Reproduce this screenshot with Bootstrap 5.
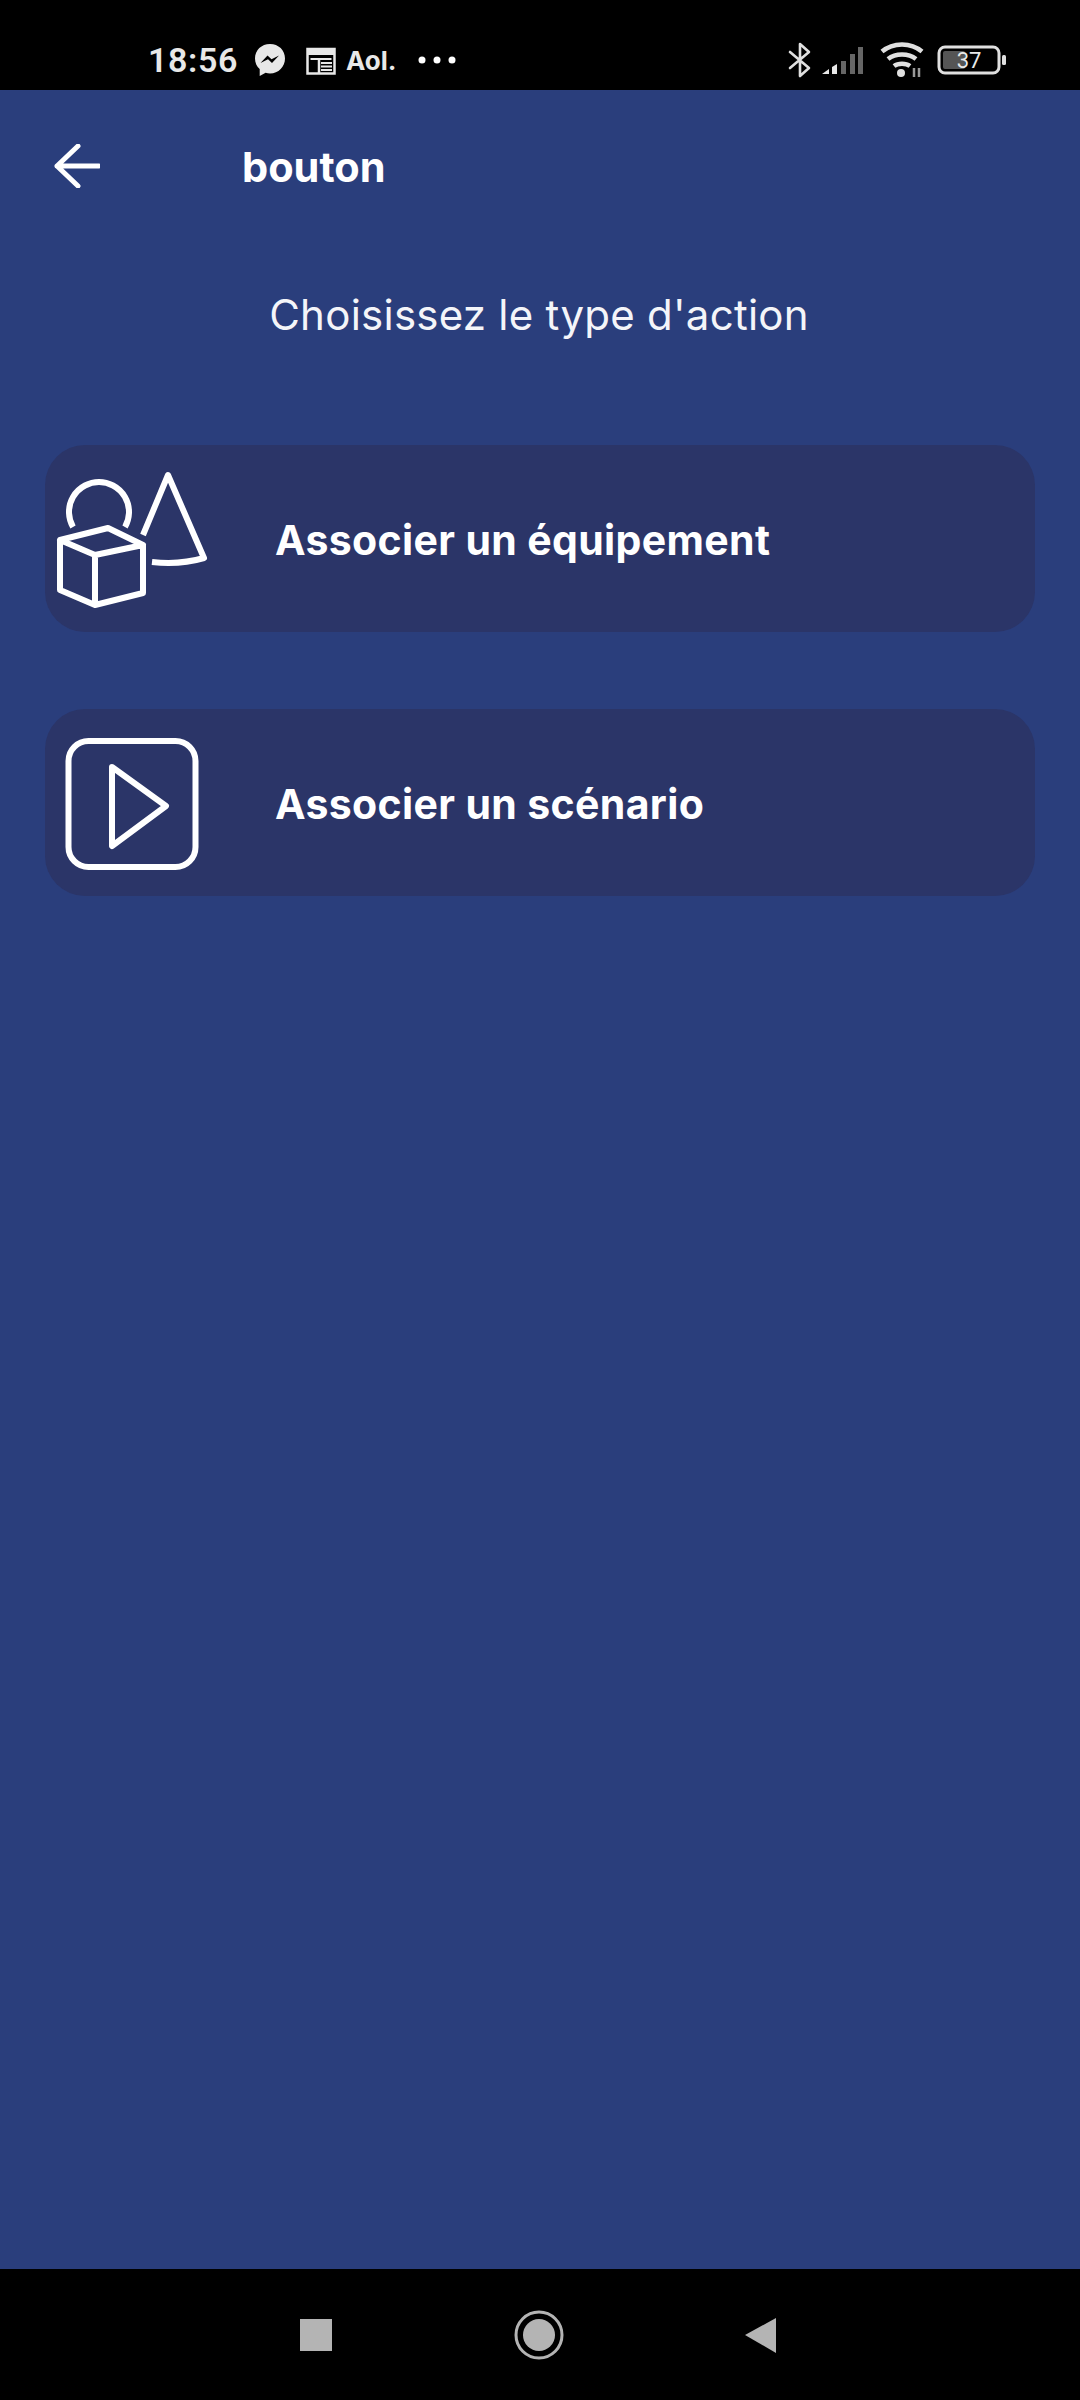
<!DOCTYPE html>
<html lang="fr">
<head>
    <meta charset="UTF-8">
    <meta name="viewport" content="width=device-width, initial-scale=1.0">
    <title>bouton</title>
    <link href="https://cdn.jsdelivr.net/npm/bootstrap@5.3.3/dist/css/bootstrap.min.css" rel="stylesheet">
    <style>
        html, body { height: 2400px; }
        body {
            background: #2a3e7c;
            color: #fff;
            font-family: Inter, "Liberation Sans", sans-serif;
            overflow: hidden;
        }
        .ecran { height: 2400px; }
        .barre-statut {
            height: 90px;
            background: #000;
            padding: 30px 0 0 148px;
            color: #e8e8e8;
        }
        .heure { font-size: 34px; font-weight: 600; width: 106px; font-family: Roboto, sans-serif; letter-spacing: .6px; }
        .agenda { margin: 0 5px 0 20px; }
        .aol { font-size: 26px; font-weight: 700; margin-left: 5px; width: 64px; }
        .droite { margin-left: auto; padding-right: 73px; }
        .ic-signal { margin-left: 9px; }
        .ic-wifi { margin-left: 17px; }
        .ic-batterie { margin-left: 11px; }
        .entete { height: 152px; padding-left: 54px; }
        .titre-page { font-size: 41.5px; font-weight: 700; margin: 3px 0 0 142px; line-height: 1; }
        .consigne {
            font-size: 42px;
            text-align: center;
            line-height: 1;
            margin: 52px 0 0 0;
            padding-right: 2px;
            letter-spacing: .25px;
            color: #f4f5f9;
        }
        .liste-actions { padding: 0 45px; margin-top: 109px; gap: 77px; }
        .action {
            height: 187px;
            background: #2b3568;
            border-radius: 40px;
            font-size: 41px;
            font-weight: 700;
            letter-spacing: .35px;
        }
        .action span { padding-top: 4px; }
        .icone-action { width: 230px; flex: none; }
        .milieu { flex: 1; }
        .barre-nav { height: 131px; background: #000; }
    </style>
</head>
<body>
    <div class="ecran d-flex flex-column">
        <div class="barre-statut d-flex align-items-center">
            <span class="heure">18:56</span>
            <svg width="32" height="34" viewBox="0 0 32 34">
                <path d="M16 1C7.500 1 1 7.200 1 15.400c0 4.300 1.800 8 4.700 10.600V33l5.900-3.200c1.400.4 2.900.6 4.400.6 8.500 0 15-6.800 15-15S24.500 1 16 1z" fill="#e8e8e8"/>
                <path d="M6.500 20l7-7.500 4 3.800 7.500-3.800-7 7.500-4-3.800z" fill="#000"/>
            </svg>
            <svg width="30" height="30" viewBox="0 0 30 30" class="agenda">
                <path d="M1.500 4h27v24.500h-27z" fill="none" stroke="#e8e8e8" stroke-width="2.500"/>
                <path d="M1.500 3h27v7h-27z" fill="#e8e8e8"/>
                <path d="M4.500 14h21M15 18h11M15 21.500h11M15 25h11" stroke="#e8e8e8" stroke-width="2" fill="none"/>
                <path d="M13 14v14" stroke="#e8e8e8" stroke-width="2.500"/>
            </svg>
            <span class="aol">Aol.</span>
            <svg width="38" height="8" viewBox="0 0 38 8" class="ms-2">
                <circle cx="4" cy="4" r="3.500" fill="#fff"/>
                <circle cx="19" cy="4" r="3.500" fill="#fff"/>
                <circle cx="34" cy="4" r="3.500" fill="#fff"/>
            </svg>
            <div class="droite d-flex align-items-center">
                <svg width="24" height="36" viewBox="0 0 24 36">
                    <path d="M2 10l19 16-9 8V2l9 8L2 26" fill="none" stroke="#e0e0e0" stroke-width="2.600" stroke-linejoin="round" stroke-linecap="round"/>
                </svg>
                <svg width="42" height="30" viewBox="0 0 42 30" class="ic-signal">
                    <path d="M1 29l7-5v5z" fill="#e8e8e8"/>
                    <path d="M11 22l5-3v10h-5z" fill="#e8e8e8"/>
                    <path d="M20 16h5v13h-5z M29 9h5v20h-5z M37 2h5v27h-5z" fill="#666"/>
                </svg>
                <svg width="46" height="36" viewBox="0 0 46 36" class="ic-wifi">
                    <path d="M2 9.500c11-9.500 29-9.500 40 0M8 17c7.500-6 20.500-6 28 0M14 24c4-3 12-3 16 0" fill="none" stroke="#e0e0e0" stroke-width="4.500"/>
                    <circle cx="21" cy="31" r="4" fill="#e0e0e0"/>
                    <path d="M34 26v9M39 26v9" stroke="#999" stroke-width="2.500"/>
                </svg>
                <svg width="70" height="30" viewBox="0 0 70 30" class="ic-batterie">
                    <rect x="2" y="2" width="60" height="26" rx="6" fill="#000" stroke="#e0e0e0" stroke-width="3"/>
                    <rect x="6" y="6" width="22" height="18" rx="2" fill="#555"/>
                    <text x="32" y="23" text-anchor="middle" font-family="Roboto, sans-serif" font-size="22" fill="#e8e8e8">37</text>
                    <rect x="65" y="10" width="4" height="10" rx="1.500" fill="#e0e0e0"/>
                </svg>
            </div>
        </div>

        <div class="entete d-flex align-items-center">
            <svg width="46" height="44" viewBox="0 0 46 44">
                <path d="M45 22H3M24 2L3 22l21 20" fill="none" stroke="#fff" stroke-width="5" stroke-linecap="round" stroke-linejoin="round"/>
            </svg>
            <h1 class="titre-page">bouton</h1>
        </div>

        <p class="consigne">Choisissez le type d'action</p>

        <div class="liste-actions d-flex flex-column">
            <div class="action d-flex align-items-center">
                <svg class="icone-action" height="187" viewBox="45 445 230 187">
                    <g fill="none" stroke="#fff" stroke-width="6" stroke-linejoin="round">
                        <path d="M60 540l48-12 35 17-48 10zM60 540v50l35 15 48-12v-48M95 555v50"/>
                        <path d="M73 527a30 30 0 1 1 52 0"/>
                        <path d="M143 535l25-60 36 83c-17 5-34 6-52 4"/>
                    </g>
                </svg>
                <span>Associer un équipement</span>
            </div>
            <div class="action d-flex align-items-center">
                <svg class="icone-action" height="187" viewBox="45 709 230 187">
                    <g fill="none" stroke="#fff" stroke-width="6" stroke-linejoin="round">
                        <rect x="68.500" y="741" width="127" height="126" rx="20"/>
                        <path d="M112 767l54 39-54 40z"/>
                    </g>
                </svg>
                <span>Associer un scénario</span>
            </div>
        </div>

        <div class="milieu"></div>

        <div class="barre-nav d-flex align-items-center justify-content-center">
            <svg width="480" height="60" viewBox="300 2305 480 60">
                <rect x="300" y="2319" width="32" height="32" fill="#b4b4b4"/>
                <circle cx="539" cy="2335" r="23" fill="none" stroke="#b4b4b4" stroke-width="3"/>
                <circle cx="539" cy="2335" r="16" fill="#b4b4b4"/>
                <path d="M745 2335l31-17v35z" fill="#b4b4b4"/>
            </svg>
        </div>
    </div>
    <script src="https://cdn.jsdelivr.net/npm/bootstrap@5.3.3/dist/js/bootstrap.bundle.min.js"></script>
</body>
</html>
